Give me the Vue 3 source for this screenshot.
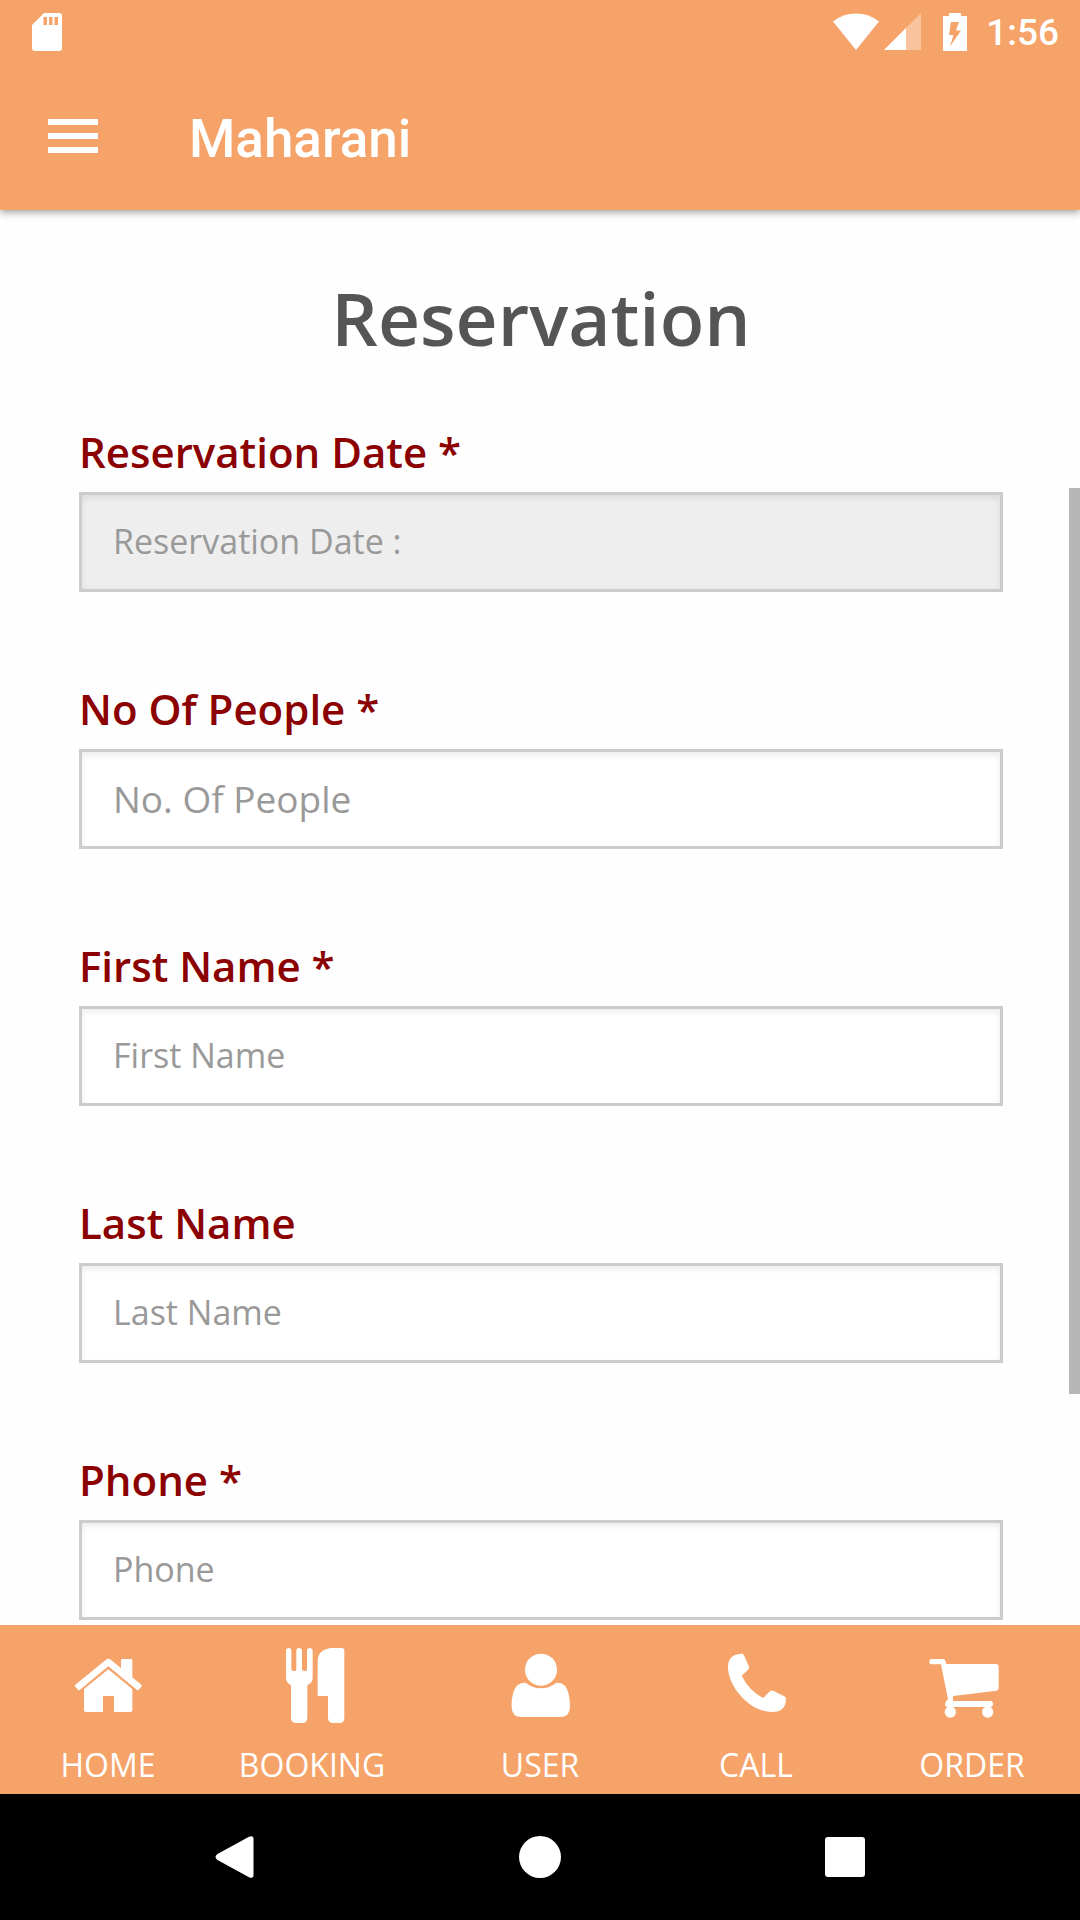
<script setup>
import { reactive } from 'vue'

const fields = [
  { id: 'date', label: 'Reservation Date *', placeholder: 'Reservation Date :', type: 'text', readonly: true },
  { id: 'people', label: 'No Of People *', placeholder: 'No. Of People', type: 'text', large: true },
  { id: 'first-name', label: 'First Name *', placeholder: 'First Name', type: 'text' },
  { id: 'last-name', label: 'Last Name', placeholder: 'Last Name', type: 'text' },
  { id: 'phone', label: 'Phone *', placeholder: 'Phone', type: 'tel' },
]

const form = reactive(Object.fromEntries(fields.map((f) => [f.id, ''])))
</script>

<template>
  <div class="app">
    <header class="header">
      <div class="status">
        <svg class="sd" width="30" height="38" viewBox="0 0 30 38" aria-hidden="true">
          <path fill="#fff" fill-rule="evenodd" d="M12 0H27Q30 0 30 3V35Q30 38 27 38H3Q0 38 0 35V12ZM11.500 4V12H15V4ZM17 4V12H20.500V4ZM22.500 4V12H26V4Z" />
        </svg>
        <div class="indicators">
          <svg width="48" height="38" viewBox="0 0 48 38" aria-hidden="true">
            <path fill="#fff" d="M1 8.500Q11 .5 24 .5T47 8.500L24 37Z" />
          </svg>
          <svg class="signal" width="37" height="38" viewBox="0 0 37 38" aria-hidden="true">
            <path fill="#fff" opacity=".35" d="M37 0V37H0Z" />
            <path fill="#fff" d="M22 15V37H0Z" />
          </svg>
          <svg class="battery" width="24" height="38" viewBox="0 0 24 38" aria-hidden="true">
            <path fill="#fff" fill-rule="evenodd" d="M6 0H18V3H24V38H0V3H6ZM8 9L6 22H10.500L7 33.500L18 17.500H13L16 9Z" />
          </svg>
          <time class="clock">1:56</time>
        </div>
      </div>
      <div class="toolbar">
        <button class="menu" type="button" aria-label="Open menu">
          <svg width="50" height="36" viewBox="0 0 50 36" aria-hidden="true">
            <path fill="#fff" d="M0 0H50V6H0ZM0 14H50V20H0ZM0 28H50V34H0Z" />
          </svg>
        </button>
        <span class="title">Maharani</span>
      </div>
    </header>

    <main class="content">
      <h1>Reservation</h1>
      <form @submit.prevent>
        <div v-for="f in fields" :key="f.id" class="field">
          <label :for="f.id">{{ f.label }}</label>
          <input
            :id="f.id"
            v-model="form[f.id]"
            :class="{ large: f.large }"
            :type="f.type"
            :placeholder="f.placeholder"
            :readonly="f.readonly"
          />
        </div>
      </form>
      <div class="scroll-thumb"></div>
    </main>

    <nav class="tabs">
      <a href="#home">
        <svg viewBox="0 138 288 240" aria-hidden="true">
          <g fill="#fff">
            <path d="M137 180Q145 173 153 180L183 204V180Q183 177 186 177H214Q217 177 217 180V232L244 254Q247 257 244 260L236 269Q233 272 230 269L145 199L60 269Q57 272 54 269L46 260Q43 257 46 254Z" />
            <path d="M145 208L217 267V330Q217 336 211 336H162V288H129V336H78Q72 336 72 330V267Z" />
          </g>
        </svg>
        <span>HOME</span>
      </a>
      <a href="#booking" class="booking">
        <svg viewBox="612 138 288 240" aria-hidden="true">
          <g fill="#fff">
            <path d="M678 152Q678 144 686 144T694 152V207Q694 213 702 213T709 207V152Q709 144 717 144T726 152V207Q726 213 734 213T741 207V152Q741 144 749 144T758 152V234Q758 248 742 256V353Q742 369 726 369H709Q693 369 693 353V256Q678 248 678 234Z" />
            <path d="M812 144H845Q853 144 853 152V353Q853 369 838 369H820Q804 369 804 353V288H773V183Q773 150 812 144Z" />
          </g>
        </svg>
        <span>BOOKING</span>
      </a>
      <a href="#user">
        <svg viewBox="36 138 288 240" aria-hidden="true">
          <g fill="#fff">
            <circle cx="183" cy="209" r="48" />
            <path d="M138 249Q158 265 183 265T228 249C261 244 270 282 270 320Q270 351 239 351H126Q95 351 95 320C95 282 105 244 138 249Z" />
          </g>
        </svg>
        <span>USER</span>
      </a>
      <a href="#call">
        <svg viewBox="684 138 288 240" aria-hidden="true">
          <path fill="#fff" d="M783 161Q789 160 792 166L806 198Q809 204 804 209L785 227Q806 270 849 294L870 274Q875 270 881 273L913 289Q918 292 918 298Q917 336 877 336C807 336 744 258 744 201Q744 164 783 161Z" />
        </svg>
        <span>CALL</span>
      </a>
      <a href="#order">
        <svg viewBox="312 138 288 240" aria-hidden="true">
          <g fill="#fff">
            <path d="M336 177H370Q375 177 376 182L379 192H528Q536 192 536 200V265Q536 271 530 272L399 288V303H511Q519 303 519 312T511 321H383Q375 321 375 312Q375 304 384 298L363 193H336Q328 193 328 185T336 177Z" />
            <circle cx="391" cy="336" r="17" />
            <circle cx="503" cy="336" r="17" />
          </g>
        </svg>
        <span>ORDER</span>
      </a>
    </nav>

    <div class="system">
      <button type="button" aria-label="Back">
        <svg width="42" height="42" viewBox="0 0 42 42"><path fill="#fff" d="M3.500 18L35 .8Q39.500-1 39.500 3V39Q39.500 43 35 41.200L3.500 24Q-.5 21 3.500 18Z" /></svg>
      </button>
      <button type="button" aria-label="Home">
        <svg width="42" height="42" viewBox="0 0 42 42"><circle fill="#fff" cx="21" cy="21" r="21" /></svg>
      </button>
      <button type="button" aria-label="Recent apps">
        <svg width="42" height="42" viewBox="0 0 42 42"><rect fill="#fff" x="1" y="1" width="40" height="40" rx="3" /></svg>
      </button>
    </div>
  </div>
</template>

<style>
body {
  margin: 0;
}
</style>

<style scoped>
.app {
  display: flex;
  flex-direction: column;
  height: 100vh;
  background: #fefefe;
  font-family: "Open Sans", "Noto Sans", sans-serif;
}

.app * {
  box-sizing: border-box;
}

svg {
  display: block;
  flex: none;
}

button {
  display: flex;
  align-items: center;
  justify-content: center;
  padding: 0;
  border: 0;
  background: none;
}

.header {
  position: relative;
  z-index: 1;
  flex: none;
  background: #f5a369;
  box-shadow: 0 2px 8px rgba(0, 0, 0, 0.4);
  color: #fff;
  font-family: Roboto, sans-serif;
  font-weight: 500;
}

.status {
  display: flex;
  align-items: center;
  justify-content: space-between;
  height: 64px;
  padding: 0 21px 0 32px;
}

.indicators {
  display: flex;
  align-items: center;
}

.signal {
  margin-left: 4px;
}

.battery {
  margin: 0 19px 0 22px;
}

.clock {
  padding-top: 2px;
  font-size: 37px;
  line-height: 40px;
}

.toolbar {
  display: flex;
  align-items: center;
  height: 146px;
  padding: 0 48px;
}

.menu {
  width: 50px;
  margin-right: 91px;
}

.title {
  padding-top: 4px;
  font-size: 53px;
  line-height: 64px;
}

.content {
  position: relative;
  flex: 1;
  min-height: 0;
  padding: 58px 77px 0 79px;
  overflow: hidden;
}

h1 {
  margin: 0 0 48px;
  color: #555;
  font-size: 73px;
  font-weight: 600;
  line-height: 100px;
  text-align: center;
}

.field {
  margin-bottom: 81px;
}

label {
  display: block;
  margin-bottom: 10px;
  padding-top: 6px;
  color: #8b0000;
  font-size: 42px;
  font-weight: 600;
  line-height: 60px;
}

input {
  display: block;
  width: 100%;
  height: 100px;
  padding: 0 31px 2px;
  border: 3px solid #ccc;
  border-radius: 0;
  outline: 0;
  background: #fff;
  box-shadow: inset 0 3px 6px rgba(0, 0, 0, 0.08);
  color: #555;
  font-family: inherit;
  font-size: 34px;
}

input.large {
  font-size: 37px;
}

input[readonly] {
  background: #eee;
}

input::placeholder {
  color: #999;
  opacity: 1;
}

.scroll-thumb {
  position: absolute;
  top: 278px;
  right: 0;
  width: 11px;
  height: 64%;
  background: #b6b6b6;
}

.tabs {
  display: flex;
  flex: none;
  height: 169px;
  background: #f5a369;
}

.tabs a {
  display: flex;
  flex: none;
  flex-direction: column;
  align-items: center;
  width: 20%;
  padding-top: 21px;
  color: #fff;
  font-size: 32px;
  line-height: 44px;
  text-decoration: none;
}

.tabs .booking {
  padding-right: 24px;
}

.tabs svg {
  width: 96px;
  height: 80px;
  margin-bottom: 17px;
}

.system {
  display: flex;
  flex: none;
  justify-content: center;
  height: 126px;
  background: #000;
}

.system button {
  width: 28.2%;
}
</style>
